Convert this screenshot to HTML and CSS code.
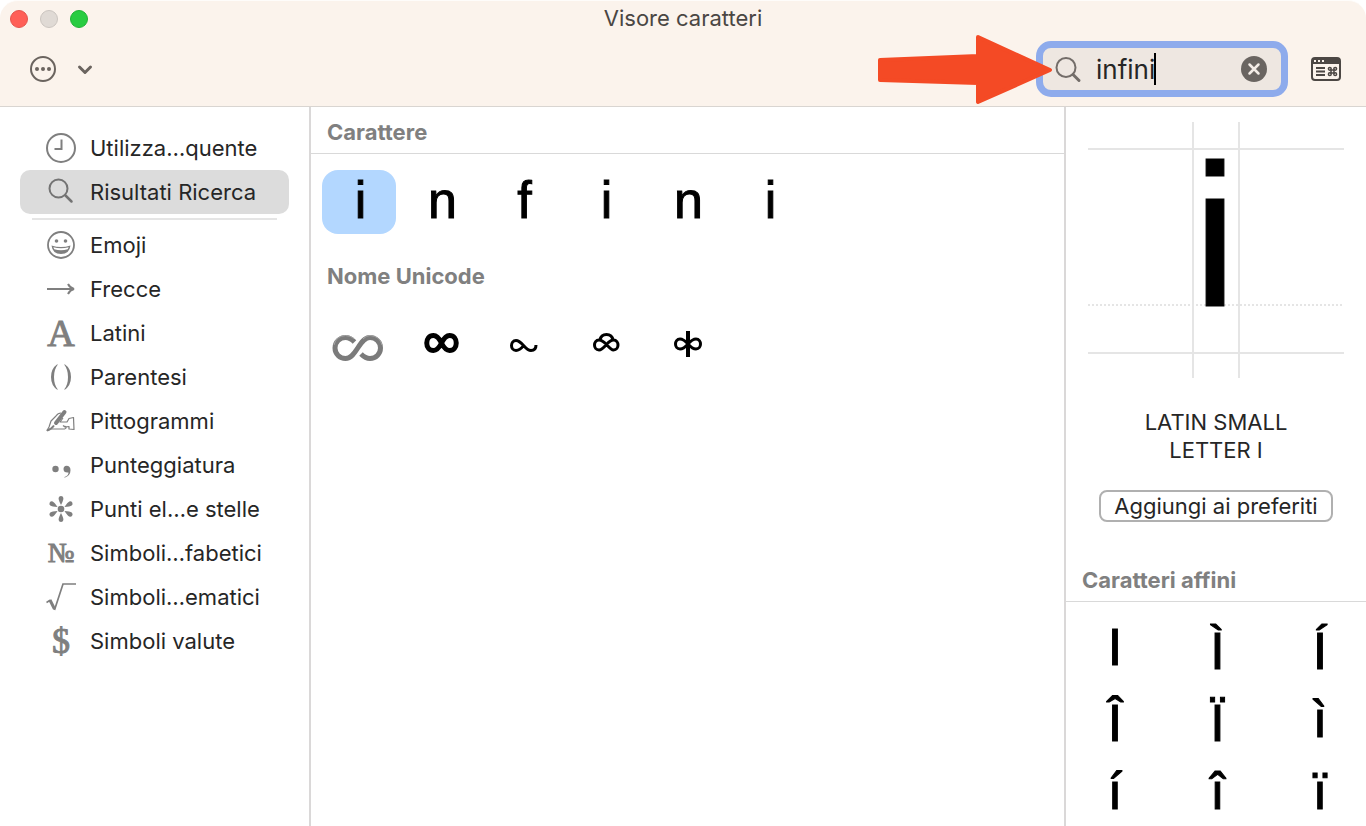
FILE: index.html
```html
<!DOCTYPE html>
<html lang="it">
<head>
    <meta charset="UTF-8">
    <meta name="viewport" content="width=device-width, initial-scale=1.0">
    <title>Visore caratteri</title>
    <link rel="stylesheet" href="styles.css">
</head>
<body>
    <div class="window">
        <header class="header">
            <div class="titlebar">
                <div class="lights">
                    <button class="light close" aria-label="Chiudi"></button>
                    <button class="light minimize" aria-label="Riduci"></button>
                    <button class="light expand" aria-label="Ingrandisci"></button>
                </div>
                <h1 class="title">Visore caratteri</h1>
            </div>
            <div class="toolbar">
                <button class="menu-button" aria-label="Azioni">
                    <svg width="64" height="28" viewBox="0 0 64 28">
                        <circle cx="14" cy="14" r="12" fill="none" stroke="#6b645f" stroke-width="2"/>
                        <g fill="#6b645f">
                            <circle cx="8" cy="14" r="2"/>
                            <circle cx="14" cy="14" r="2"/>
                            <circle cx="20" cy="14" r="2"/>
                        </g>
                        <path d="M50.500 12l5.500 5.500 5.500-5.500" fill="none" stroke="#6b645f" stroke-width="3" stroke-linecap="round" stroke-linejoin="round"/>
                    </svg>
                </button>
                <div class="search">
                    <label for="search" class="search-label" aria-label="Cerca">
                        <svg width="28" height="28" viewBox="0 0 28 28" fill="none" stroke="#736d69" stroke-linecap="round">
                            <circle cx="11" cy="12.500" r="9.500" stroke-width="2"/>
                            <path d="M18 19.500l6 6" stroke-width="3"/>
                        </svg>
                    </label>
                    <div class="field">
                        <input type="text" id="search" class="search-input" value="infini">
                        <span class="caret"></span>
                    </div>
                    <button class="clear" aria-label="Cancella">
                        <svg width="26" height="26" viewBox="0 0 26 26">
                            <circle cx="13" cy="13" r="13" fill="#6a6561"/>
                            <path d="M8.500 8.500l9 9M17.500 8.500l-9 9" stroke="#f3ece6" stroke-width="2.500" stroke-linecap="round"/>
                        </svg>
                    </button>
                    <svg class="arrow" width="176" height="70" viewBox="0 0 176 70">
                        <path d="M3 25L101 21V2L173 35L101 67V48L3 45Z" fill="#f44a25" stroke="#f44a25" stroke-width="4" stroke-linejoin="round"/>
                    </svg>
                </div>
                <button class="compact" aria-label="Vista compatta">
                    <svg width="30" height="24" viewBox="0 0 30 24">
                        <rect x="1" y="1" width="28" height="22" rx="3" fill="none" stroke="#4c4744" stroke-width="2"/>
                        <path d="M1 7V4q0-3 3-3h22q3 0 3 3v3z" fill="#4c4744"/>
                        <g fill="#fbf3ec">
                            <rect x="3" y="3" width="2" height="2"/>
                            <rect x="7" y="3" width="2" height="2"/>
                            <rect x="11" y="3" width="2" height="2"/>
                        </g>
                        <path d="M5 11h9M5 14.500h9M5 18h9" stroke="#4c4744" stroke-width="1.800"/>
                        <g fill="none" stroke="#4c4744" stroke-width="1.500">
                            <path d="M20 13h3v3h-3z"/>
                            <circle cx="18.800" cy="11.800" r="1.400"/>
                            <circle cx="24.200" cy="11.800" r="1.400"/>
                            <circle cx="18.800" cy="17.200" r="1.400"/>
                            <circle cx="24.200" cy="17.200" r="1.400"/>
                        </g>
                    </svg>
                </button>
            </div>
        </header>

        <div class="content">
            <nav class="sidebar">
                <a href="#" class="item">
                    <svg class="icon" viewBox="0 0 30 30" fill="none" stroke="#7f7f7f" stroke-width="2">
                        <circle cx="15" cy="15" r="14"/>
                        <path d="M15.500 6.500V16H8.500"/>
                    </svg>
                    <span>Utilizza…quente</span>
                </a>
                <a href="#" class="item selected">
                    <svg class="icon" viewBox="0 0 30 30" fill="none" stroke="#737373" stroke-linecap="round">
                        <circle cx="12.500" cy="11.500" r="9" stroke-width="2"/>
                        <path d="M19.500 18.500l6 6" stroke-width="2.500"/>
                    </svg>
                    <span>Risultati Ricerca</span>
                </a>
                <hr class="divider">
                <a href="#" class="item">
                    <svg class="icon" viewBox="0 0 30 30">
                        <circle cx="15" cy="15" r="13" fill="none" stroke="#7f7f7f" stroke-width="1.800"/>
                        <circle cx="10.500" cy="11" r="1.800" fill="#7f7f7f"/>
                        <circle cx="19.500" cy="11" r="1.800" fill="#7f7f7f"/>
                        <path d="M5.500 15.500q9.500 3 19 0q-1 8.500-9.500 8.500t-9.500-8.500z" fill="#7f7f7f"/>
                        <path d="M7.300 17.300q7.700 2 15.400 0l-1 2q-6.700 2-13.400 0z" fill="#fff"/>
                    </svg>
                    <span>Emoji</span>
                </a>
                <a href="#" class="item">
                    <svg class="icon" viewBox="0 0 30 30" fill="none" stroke="#7f7f7f">
                        <path d="M1 15h26" stroke-width="2"/>
                        <path d="M22 10q2 4 6 5q-4 1-6 5" stroke-width="2"/>
                    </svg>
                    <span>Frecce</span>
                </a>
                <a href="#" class="item">
                    <span class="icon glyph">A</span>
                    <span>Latini</span>
                </a>
                <a href="#" class="item">
                    <svg class="icon" viewBox="0 0 30 30" fill="#7f7f7f">
                        <path d="M11.500 2Q5 6.500 5 15T11.500 28V27Q8 22.500 8 15T11.500 3Z"/>
                        <path d="M18.500 2Q25 6.500 25 15T18.500 28V27Q22 22.500 22 15T18.500 3Z"/>
                    </svg>
                    <span>Parentesi</span>
                </a>
                <a href="#" class="item">
                    <svg class="icon" viewBox="0 0 30 30" fill="none" stroke="#7f7f7f" stroke-width="1.200" stroke-linejoin="round">
                        <path d="M15 7q-3 0-5 3l-5 5-2 6-2 3.500 3-1.500h14.500q2-.5 1.500-2l-1.500-1"/>
                        <path d="M17 12l-3 4h7l2-3.500 4.500-1 .5 12-5-.5v-2.500l-4 .5-2-1.500"/>
                        <path d="M1 24.500q4-1 7-5" stroke-width="2"/>
                        <path d="M10 17l8.500-11" stroke-width="4" stroke-linecap="round"/>
                    </svg>
                    <span>Pittogrammi</span>
                </a>
                <a href="#" class="item">
                    <svg class="icon" viewBox="0 0 30 30" fill="#7f7f7f">
                        <circle cx="9.500" cy="19" r="3.200"/>
                        <path d="M18.500 27q4-1.500 4-4.500q-5 .5-5-3.500q0-3 3-3.200q4 0 4 4.500q0 5.500-6 7.500z"/>
                    </svg>
                    <span>Punteggiatura</span>
                </a>
                <a href="#" class="item">
                    <svg class="icon" viewBox="0 0 30 30" fill="#7f7f7f">
                        <circle cx="15" cy="15" r="3.300"/>
                        <g id="petal">
                            <path d="M15 11q-2.600-5-2.400-7Q13 2 15 2t2.400 2Q17.600 6 15 11z"/>
                            <path d="M15 19q-2.600 5-2.400 7Q13 28 15 28t2.400-2Q17.600 24 15 19z"/>
                        </g>
                        <use href="#petal" transform="rotate(60 15 15)"/>
                        <use href="#petal" transform="rotate(120 15 15)"/>
                    </svg>
                    <span>Punti el…e stelle</span>
                </a>
                <a href="#" class="item">
                    <span class="icon glyph small">№</span>
                    <span>Simboli…fabetici</span>
                </a>
                <a href="#" class="item">
                    <svg class="icon" viewBox="0 0 30 30" fill="none" stroke="#7f7f7f">
                        <path d="M.5 20.500l4-2.500" stroke-width="1.500"/>
                        <path d="M4 18l4.500 9" stroke-width="3"/>
                        <path d="M8.500 28L17 2h13" stroke-width="1.700"/>
                    </svg>
                    <span>Simboli…ematici</span>
                </a>
                <a href="#" class="item">
                    <span class="icon glyph bold">$</span>
                    <span>Simboli valute</span>
                </a>
            </nav>

            <main class="results">
                <h2 class="heading lined">Carattere</h2>
                <div class="chars">
                    <button class="char active">i</button>
                    <button class="char">n</button>
                    <button class="char">f</button>
                    <button class="char">i</button>
                    <button class="char">n</button>
                    <button class="char">i</button>
                </div>
                <h2 class="heading">Nome Unicode</h2>
                <div class="chars symbols">
                    <button class="char" aria-label="Infinito, emoji">
                        <svg width="54" height="64" viewBox="0 0 54 64" fill="none">
                            <path d="M22.500 30Q18 25.500 13.500 25.500A10.500 10.500 0 0 0 13.500 46.500C24.500 46.500 27 25.500 38 25.500A10.500 10.500 0 0 1 38 46.500Q33.500 46.500 29 42" stroke="#7b7b7b" stroke-width="5"/>
                            <path d="M22 26.500Q18 23.500 13.500 23.500Q4 24 2 33M31 27Q34 23.500 38 23.500Q48 24 50 33" stroke="#a5a5a5" stroke-width="1"/>
                        </svg>
                    </button>
                    <button class="char" aria-label="Infinito">
                        <svg width="54" height="64" viewBox="0 0 54 64" fill="none">
                            <path d="M27.500 31C25 26 22.500 23.500 19.500 23.500C10.500 23.500 10.500 38.500 19.500 38.500C22.500 38.500 25 36 27.500 31C30 26 32.500 23.500 35.500 23.500C44.500 23.500 44.500 38.500 35.500 38.500C32.500 38.500 30 36 27.500 31Z" stroke="#000" stroke-width="5"/>
                        </svg>
                    </button>
                    <button class="char" aria-label="S pigra invertita">
                        <svg width="54" height="64" viewBox="0 0 54 64" fill="none">
                            <path d="M40 33Q40 38.500 35 38.500C29 38.500 26 28.500 20 28.500C14 28.500 14 38.500 20 38.500C24 38.500 26 35.500 28 33" stroke="#000" stroke-width="3"/>
                        </svg>
                    </button>
                    <button class="char" aria-label="Infinito con legatura">
                        <svg width="54" height="64" viewBox="0 0 54 64" fill="none" stroke="#000" stroke-width="3">
                            <path d="M28.500 32.500C24.500 28.500 22.500 28 21 28C15 28 15 38 21 38C23 38 25 36.500 28.500 32.500C32 28.500 33.500 28 35.500 28C41.500 28 41.500 38 35.500 38C33.500 38 32 36.500 28.500 32.500Z"/>
                            <path d="M22 28Q23 22.500 28.500 22.500T35 28"/>
                        </svg>
                    </button>
                    <button class="char" aria-label="Infinito negato">
                        <svg width="54" height="64" viewBox="0 0 54 64" fill="none" stroke="#000">
                            <path d="M28 32C24 27.500 22 27 20 27C14 27 14 37 20 37C22 37 24 36.500 28 32C32 27.500 34 27 36 27C42 27 42 37 36 37C34 37 32 36.500 28 32Z" stroke-width="3"/>
                            <path d="M28 19v26" stroke-width="4"/>
                        </svg>
                    </button>
                </div>
            </main>

            <aside class="details">
                <svg class="preview" viewBox="0 0 256 256">
                    <g stroke="#e5e5e5" stroke-width="2">
                        <path d="M0 27h256M0 231h256M105 0v256M151 0v256"/>
                        <path d="M0 183h256" stroke-dasharray="2 2"/>
                    </g>
                    <text x="127" y="184" text-anchor="middle">i</text>
                </svg>
                <p class="name">LATIN SMALL<br>LETTER I</p>
                <button class="favorite">Aggiungi ai preferiti</button>
                <h2 class="heading lined related-heading">Caratteri affini</h2>
                <div class="related">
                    <button class="char">I</button>
                    <button class="char tall">Ì</button>
                    <button class="char tall">Í</button>
                    <button class="char tall">Î</button>
                    <button class="char tall">Ï</button>
                    <button class="char">ì</button>
                    <button class="char">í</button>
                    <button class="char">î</button>
                    <button class="char">ï</button>
                </div>
            </aside>
        </div>
    </div>
</body>
</html>
```
FILE: styles.css
```css
* {
    margin: 0;
    padding: 0;
    box-sizing: border-box;
}

body {
    background: #fff;
    color: #262626;
    font-family: Inter, "Liberation Sans", sans-serif;
    font-size: 22px;
}

button {
    border: none;
    background: none;
    color: inherit;
    font: inherit;
}

svg {
    display: block;
}

.window {
    height: 100vh;
    display: flex;
    flex-direction: column;
    overflow: hidden;
}

/* Title bar and toolbar */
.header {
    background: #fbf3ec;
    border-top: 1px solid #fefcfa;
    border-bottom: 1px solid #d9d5d1;
    border-radius: 18px 18px 0 0;
    padding-bottom: 5px;
}

.titlebar {
    height: 36px;
    padding: 0 10px;
    display: grid;
    grid-template-columns: 1fr auto 1fr;
    align-items: center;
}

.lights {
    display: flex;
    gap: 12px;
}

.light {
    width: 18px;
    height: 18px;
    border-radius: 50%;
}

.close {
    background: #ff5f57;
    border: 1px solid #e5544d;
}

.minimize {
    background: #e0dad5;
    border: 1px solid #cbc5c0;
}

.expand {
    background: #28cc41;
    border: 1px solid #20b236;
}

.title {
    padding-bottom: 2px;
    color: #4a4643;
    font-size: 22px;
    font-weight: 400;
}

.toolbar {
    height: 64px;
    padding: 0 25px 0 29px;
    display: flex;
    align-items: center;
}

.search {
    position: relative;
    width: 252px;
    height: 56px;
    margin-left: auto;
    margin-right: 23px;
    padding: 0 14px 0 12px;
    display: flex;
    align-items: center;
    border: 7px solid #8eabec;
    border-radius: 15px;
    background: #eee7e1;
}

.search-label {
    margin-right: 13px;
}

.field {
    position: relative;
    flex: 1;
}

.search-input {
    width: 100%;
    height: 32px;
    display: block;
    border: none;
    outline: none;
    background: none;
    color: #262626;
    font-family: inherit;
    font-size: 26px;
}

.caret {
    position: absolute;
    top: 0;
    left: 58px;
    width: 2px;
    height: 32px;
    background: #000;
}

.arrow {
    position: absolute;
    top: -13px;
    right: 228px;
}

/* Sidebar */
.content {
    flex: 1;
    min-height: 0;
    display: flex;
}

.sidebar {
    width: 311px;
    padding: 19px 20px;
    border-right: 2px solid #dad8d8;
}

.item {
    height: 44px;
    padding-left: 26px;
    display: flex;
    align-items: center;
    gap: 14px;
    border-radius: 10px;
    color: #262626;
    text-decoration: none;
}

.selected {
    background: #dcdcdc;
}

.divider {
    height: 2px;
    margin: 4px 12px 3px;
    border: none;
    background: #e5e5e5;
}

.icon {
    width: 30px;
    height: 30px;
    flex: none;
}

.glyph {
    display: flex;
    justify-content: center;
    align-items: center;
    color: #7f7f7f;
    font-family: "Liberation Serif", serif;
    font-size: 38px;
    line-height: 30px;
    -webkit-text-stroke: 1px #7f7f7f;
}

.small {
    font-size: 28px;
}

.bold {
    font-size: 36px;
}

/* Search results */
.results {
    flex: 1;
    min-width: 0;
}

.heading {
    height: 47px;
    padding: 4px 16px 0;
    display: flex;
    align-items: center;
    color: #808080;
    font-size: 22px;
    font-weight: 700;
}

.lined {
    border-bottom: 1px solid #d9d9d9;
}

.chars {
    padding: 16px 11px;
    display: flex;
    flex-wrap: wrap;
    gap: 8px;
}

.chars .char {
    padding: 0 0 4px 3px;
}

.chars.symbols {
    padding-top: 15px;
}

.symbols .char {
    padding: 0;
}

.char {
    width: 74px;
    height: 64px;
    display: flex;
    justify-content: center;
    align-items: center;
    border-radius: 16px;
    color: #000;
    font-family: "Liberation Sans", Arial, sans-serif;
    font-size: 52px;
    line-height: 60px;
    -webkit-text-stroke: 1px #000;
}

.active {
    background: #b3d7ff;
}

/* Character details */
.details {
    width: 302px;
    border-left: 2px solid #dad8d8;
    display: flex;
    flex-direction: column;
    align-items: center;
    overflow: hidden;
}

.preview {
    width: 256px;
    height: 256px;
    margin-top: 15px;
    flex: none;
}

.preview text {
    font-family: "Liberation Sans", Arial, sans-serif;
    font-size: 203px;
    stroke: #000;
    stroke-width: 1px;
}

.name {
    margin-top: 30px;
    line-height: 28px;
    text-align: center;
}

.favorite {
    height: 32px;
    margin-top: 26px;
    padding: 0 13px;
    border: 2px solid #b0b0b0;
    border-radius: 8px;
    line-height: 28px;
    flex: none;
}

.related-heading {
    width: 100%;
    margin-top: 33px;
    flex: none;
}

.related {
    width: 100%;
    padding: 13px 9px 0 12px;
    display: grid;
    grid-template-columns: 74px 74px 74px;
    justify-content: space-between;
    row-gap: 8px;
}

.tall {
    padding-top: 8px;
}
```
